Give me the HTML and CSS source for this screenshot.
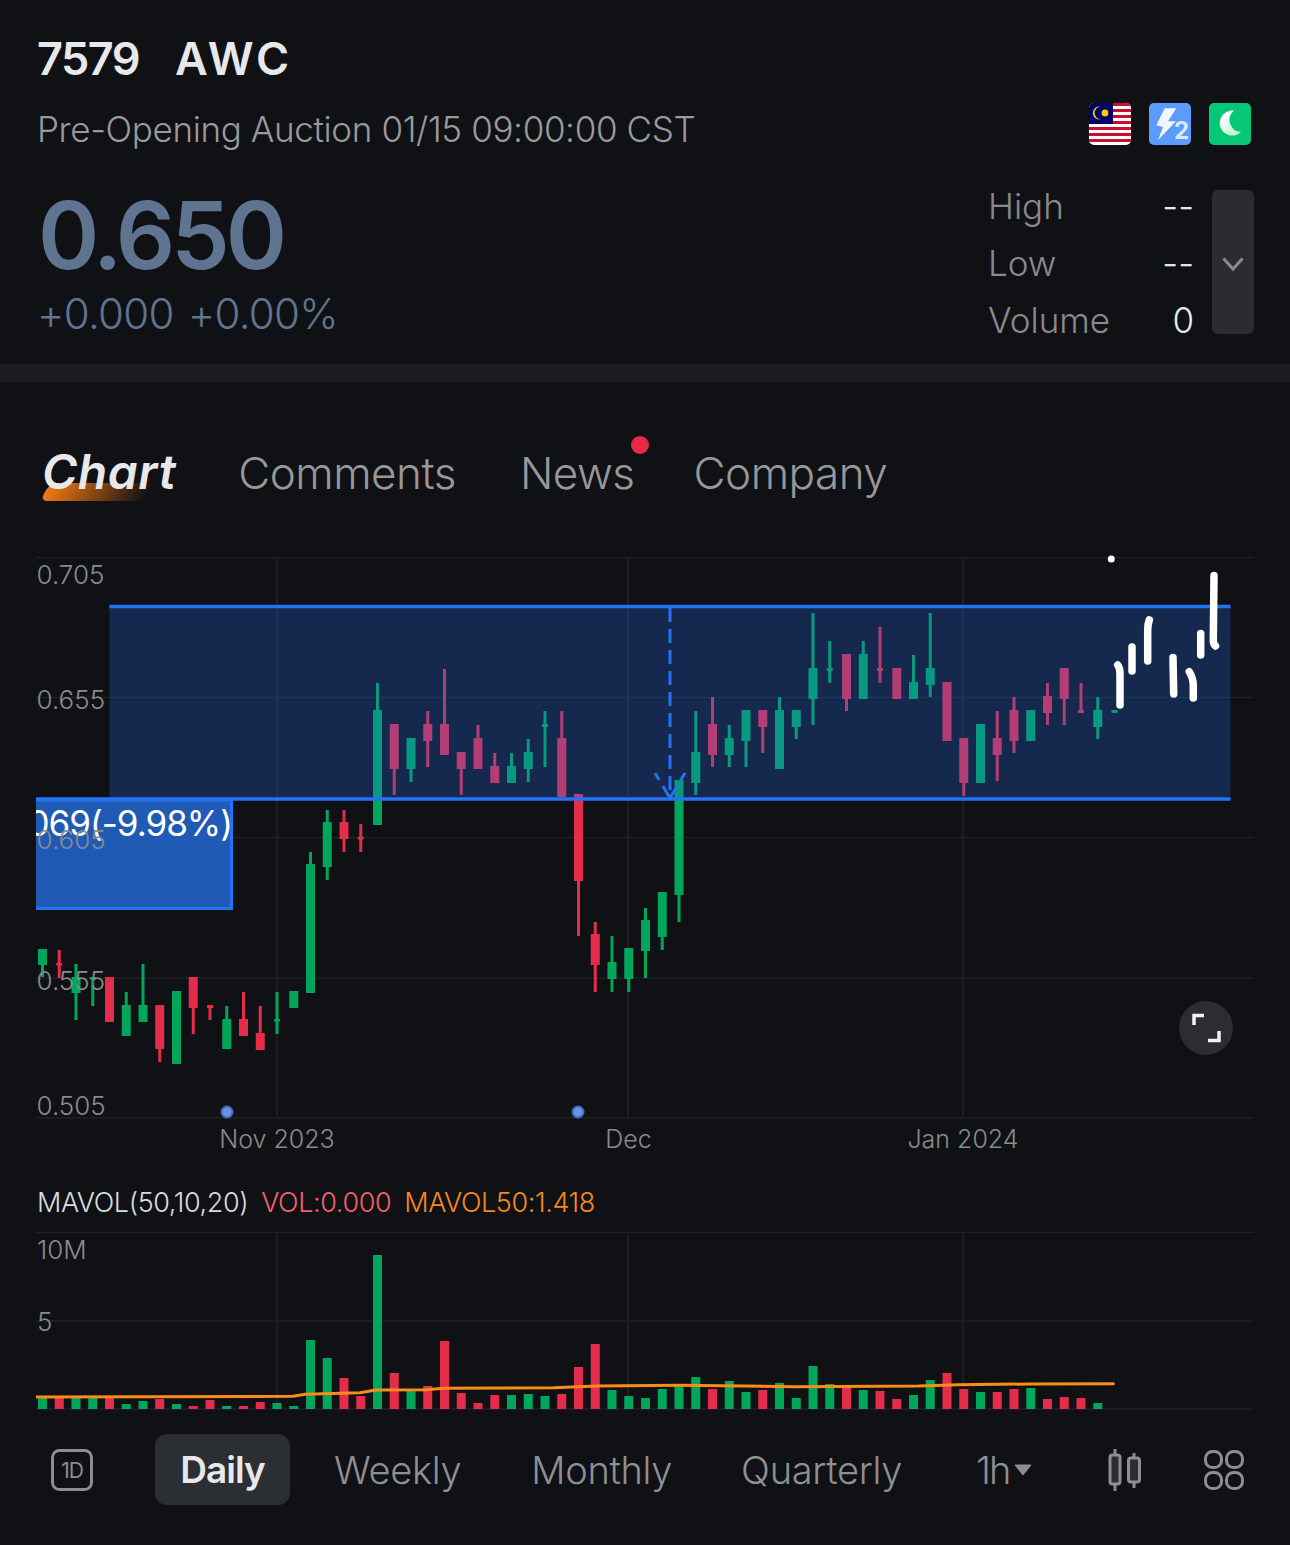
FILE: index.html
```html
<!DOCTYPE html>
<html lang="en">
<head>
  <meta charset="UTF-8">
  <title>7579 AWC</title>
  <link rel="stylesheet" href="styles.css">
</head>
<body>

  <header class="quote">
    <div class="quote-title"><span>7579</span><span class="quote-name">AWC</span></div>
    <div class="quote-status">
      <span class="status-text">Pre-Opening Auction 01/15 09:00:00 CST</span>
      <div class="badges">
        <svg class="badge" viewBox="0 0 42 42">
          <rect width="42" height="42" fill="#fff"/>
          <path d="M0 1.5h42M0 7.5h42M0 13.5h42M0 19.5h42M0 25.5h42M0 31.5h42M0 37.5h42" stroke="#c8102e" stroke-width="3"/>
          <rect width="24" height="21" fill="#010066"/>
          <path d="M12 3.6A6.6 6.6 0 1 0 12 16.4A5.4 5.4 0 1 1 12 3.6Z" fill="#ffcc00"/>
          <circle cx="16" cy="10" r="3.4" fill="#ffcc00"/>
        </svg>
        <svg class="badge" viewBox="0 0 42 42">
          <rect width="42" height="42" fill="#5b9bfb"/>
          <path d="M15.7 5.3H27.3L19 18.3H27L9 37L14 24L7.3 22.3Z" fill="#f2f7ff"/>
          <text class="badge-num" x="25" y="36">2</text>
        </svg>
        <svg class="badge" viewBox="0 0 42 42">
          <defs>
            <linearGradient id="moonFill" x1="0" y1="0" x2="1" y2="1">
              <stop offset="0.2" stop-color="#ffffff"/>
              <stop offset="1" stop-color="#a8eecb"/>
            </linearGradient>
          </defs>
          <rect width="42" height="42" fill="#05c776"/>
          <path d="M25 7.7A12.5 12.5 0 1 0 32 29A12 12 0 0 1 25 7.7Z" fill="url(#moonFill)"/>
        </svg>
      </div>
    </div>
    <div class="quote-main">
      <div>
        <div class="price">0.650</div>
        <div class="change"><span>+0.000</span><span>+0.00%</span></div>
      </div>
      <div class="stats">
        <dl class="stats-list">
          <div class="stats-row"><dt>High</dt><dd>--</dd></div>
          <div class="stats-row"><dt>Low</dt><dd>--</dd></div>
          <div class="stats-row"><dt>Volume</dt><dd>0</dd></div>
        </dl>
        <div class="stats-toggle">
          <svg width="22" height="14" viewBox="0 0 22 14"><path d="M1.5 1.5L11 12L20.5 1.5" fill="none" stroke="#8a8a8e" stroke-width="3"/></svg>
        </div>
      </div>
    </div>
  </header>

  <nav class="tabs">
    <a class="tab tab-active">Chart</a>
    <a class="tab tab-comments">Comments</a>
    <a class="tab tab-news">News</a>
    <a class="tab tab-company">Company</a>
  </nav>

  <svg class="price-chart" viewBox="0 540 1290 630">
    <defs>
      <clipPath id="boxClip"><rect x="36" y="799" width="197" height="111"/></clipPath>
    </defs>
    <path class="grid" d="M36 557.5H1254M36 697.5H1254M36 837.5H1254M36 978H1254M36 1118H1254"/>
    <path class="grid grid-v" d="M277 557V1118M628 557V1118M963 557V1118"/>
    <g id="candles"></g>

    <rect class="band" x="109.5" y="606.5" width="1121" height="192.5"/>
    <path class="band-line" d="M109.5 606.5H1230.5M36 799H1230.5"/>
    <path class="arrow" d="M670 608V797M670 798L655 773M670 798L685 773"/>

    <rect class="box" x="36" y="800" width="195.5" height="108.500"/>
    <path class="box-line" d="M36 800H231.500V908.500H36"/>
    <text class="box-text" x="232" y="836" clip-path="url(#boxClip)">-0.069(-9.98%)</text>

    <g class="axis">
      <text x="36.500" y="584">0.705</text>
      <text x="36.500" y="709">0.655</text>
      <text x="36.500" y="849">0.605</text>
      <text x="36.500" y="990">0.555</text>
      <text x="36.500" y="1115">0.505</text>
    </g>
    <g class="axis axis-time">
      <text x="277" y="1148">Nov 2023</text>
      <text x="628.500" y="1148">Dec</text>
      <text x="963" y="1148">Jan 2024</text>
    </g>

    <circle class="marker" cx="227" cy="1112" r="5.500"/>
    <circle class="marker" cx="578" cy="1112" r="5.500"/>

    <g class="scribble">
      <circle cx="1111.300" cy="559" r="3.500" fill="#fff" stroke="none"/>
      <path d="M1117.700 665Q1120 668 1120 674V705"/>
      <path d="M1132 647V671"/>
      <path d="M1149.300 620Q1147.700 624 1147.700 630V661"/>
      <path d="M1173 657.500L1173.700 694"/>
      <path d="M1189.300 671.700Q1193.300 678 1193.300 686V698"/>
      <path d="M1200.700 633.500V655"/>
      <path d="M1214 575.500L1213.300 640Q1213.300 644 1215.500 646"/>
    </g>

    <circle class="expand" cx="1206" cy="1028" r="27"/>
    <path class="expand-icon" d="M1194 1025V1015.500H1204M1219 1031V1040.500H1208"/>
  </svg>

  <div class="legend">
    <span>MAVOL(50,10,20)</span>
    <span class="legend-vol">VOL:0.000</span>
    <span class="legend-ma">MAVOL50:1.418</span>
  </div>

  <svg class="volume-chart" viewBox="0 1225 1290 195">
    <path class="grid" d="M36 1232.500H1254M36 1321H1254M36 1409H1254"/>
    <path class="grid grid-v" d="M277 1232V1409M628 1232V1409M963 1232V1409"/>
    <g id="bars"></g>
    <path class="ma-line" d="M36 1397L293 1396.300L305 1394.300L360 1392.700L376 1390L427 1389.700L443 1388.300L554 1387.700L597 1386L680 1385.300L795 1386.700L919 1386L958 1384.700L1030 1384L1114.500 1383.700"/>
    <g class="axis">
      <text x="37" y="1259">10M</text>
      <text x="37" y="1331">5</text>
    </g>
  </svg>

  <div class="periods">
    <svg class="icon-1d" width="42" height="42" viewBox="0 0 42 42">
      <rect x="1.500" y="1.500" width="39" height="39" rx="7" fill="none" stroke="#8e8e92" stroke-width="3"/>
      <text x="21" y="29">1D</text>
    </svg>
    <a class="period period-active">Daily</a>
    <a class="period period-weekly">Weekly</a>
    <a class="period period-monthly">Monthly</a>
    <a class="period period-quarterly">Quarterly</a>
    <a class="period period-hour">1h<svg width="18" height="12" viewBox="0 0 18 12"><path d="M1 1H17L9 11Z" fill="#8e8e92" stroke="#8e8e92" stroke-linejoin="round"/></svg></a>
    <svg class="icon-candles" width="36" height="44" viewBox="0 0 36 44">
      <path d="M8 1V7M8 36V43M27 5V10M27 34V40" stroke="#8e8e92" stroke-width="3" fill="none"/>
      <rect x="3" y="7" width="10" height="29" rx="2.500" fill="#2b2d30" stroke="#8e8e92" stroke-width="3"/>
      <rect x="21.500" y="10" width="11" height="24" rx="2.500" fill="#2b2d30" stroke="#8e8e92" stroke-width="3"/>
    </svg>
    <svg class="icon-grid" width="40" height="40" viewBox="0 0 40 40">
      <g fill="none" stroke="#8e8e92" stroke-width="3">
        <rect x="1.500" y="1.500" width="16" height="16" rx="7"/>
        <rect x="22.500" y="1.500" width="16" height="16" rx="7"/>
        <rect x="1.500" y="22.500" width="16" height="16" rx="7"/>
        <rect x="22.500" y="22.500" width="16" height="16" rx="7"/>
      </g>
    </svg>
  </div>

  <script src="chart.js"></script>
</body>
</html>
```

FILE: styles.css
```css
body {
  margin: 0;
  width: 1290px;
  height: 1545px;
  overflow: hidden;
  background-color: #101114;
  color: #e8e8ea;
  font-family: Inter, Roboto, sans-serif;
}
svg {
  display: block;
}

/* header */
.quote {
  height: 364px;
  padding: 0 36px 0 37px;
  box-sizing: border-box;
}
.quote-title {
  display: flex;
  gap: 36px;
  padding-top: 31px;
  font-size: 45px;
  line-height: 55px;
  font-weight: 600;
  letter-spacing: -1.5px;
}
.quote-name {
  letter-spacing: 3px;
}
.quote-status {
  display: flex;
  justify-content: space-between;
  align-items: center;
  margin-top: 17px;
  height: 42px;
  font-size: 35px;
  font-weight: 300;
  letter-spacing: -0.37px;
  color: #9a9a9d;
}
.status-text {
  position: relative;
  top: 5px;
}
.badges {
  display: flex;
  gap: 18px;
  margin-right: 3px;
}
.badge {
  width: 42px;
  height: 42px;
  border-radius: 5px;
}
.badge-num {
  font-size: 24px;
  font-weight: 700;
  fill: #dbe8ff;
}
.quote-main {
  display: flex;
  justify-content: space-between;
  margin-top: 45px;
}
.price {
  margin-left: 1px;
  font-size: 93px;
  line-height: 90px;
  font-weight: 600;
  letter-spacing: -4px;
  color: #5f7491;
}
.change {
  display: flex;
  gap: 14px;
  margin: 9px 0 0 0;
  font-size: 42px;
  line-height: 50px;
  font-weight: 300;
  letter-spacing: -0.7px;
  color: #5f7491;
}
.stats {
  display: flex;
  gap: 18px;
}
.stats-list {
  margin: -2px 0 0;
  width: 206px;
}
.stats-row {
  display: flex;
  justify-content: space-between;
  height: 57px;
  font-size: 35px;
  line-height: 36px;
  font-weight: 300;
}
.stats-row dt {
  color: #8a8a8e;
}
.stats-row dd {
  margin: 0;
  color: #e8e8ea;
}
.stats-toggle {
  display: flex;
  align-items: center;
  justify-content: center;
  width: 42px;
  height: 144px;
  padding-top: 4px;
  box-sizing: border-box;
  border-radius: 6px;
  background-color: #2a2c30;
}

/* tabs */
.tabs {
  display: flex;
  align-items: baseline;
  height: 176px;
  box-sizing: border-box;
  padding: 63px 0 0 42px;
  border-top: 18px solid #1a1c1f;
}
.tab {
  position: relative;
  font-size: 44px;
  line-height: 54px;
  font-weight: 300;
  letter-spacing: -0.5px;
  color: #98989b;
}
.tab-active {
  font-size: 48px;
  font-weight: 600;
  font-style: italic;
  letter-spacing: 0.5px;
  color: #e8e8ea;
  z-index: 0;
}
.tab-active::before {
  content: "";
  position: absolute;
  z-index: -1;
  left: 3px;
  bottom: -2px;
  width: 104px;
  height: 18px;
  border-radius: 7px 0 0 7px;
  transform: skewX(-30deg);
  background: linear-gradient(90deg, #f47a12, #f47a1200);
}
.tab-comments {
  margin-left: 62px;
}
.tab-news {
  margin-left: 64px;
}
.tab-news::after {
  content: "";
  position: absolute;
  top: -10px;
  right: -14px;
  width: 18px;
  height: 18px;
  border-radius: 50%;
  background-color: #e82b45;
}
.tab-company {
  margin-left: 59px;
}

/* charts */
.price-chart {
  width: 1290px;
  height: 630px;
}
.volume-chart {
  width: 1290px;
  height: 195px;
}
.grid {
  fill: none;
  stroke: #1e2023;
  stroke-width: 1.5;
}
.grid-v {
  stroke-width: 2;
  stroke: #1b1d20;
}
.band {
  fill: rgba(32, 114, 248, 0.25);
}
.band-line {
  fill: none;
  stroke: #2472f5;
  stroke-width: 3.400;
}
.arrow {
  fill: none;
  stroke: #2472f5;
  stroke-width: 3;
  stroke-dasharray: 14 7;
}
.box {
  fill: #1f5ab5;
}
.box-line {
  fill: none;
  stroke: #2472f5;
  stroke-width: 3;
}
.box-text {
  font-size: 35px;
  font-weight: 400;
  letter-spacing: -1px;
  fill: #fff;
  text-anchor: end;
}
.axis text {
  font-size: 26px;
  font-weight: 300;
  fill: #8a8b8e;
}
.axis-time text {
  text-anchor: middle;
  font-size: 25px;
}
.marker {
  fill: #6e90e4;
  stroke: #4469c4;
  stroke-width: 2;
}
.scribble path {
  fill: none;
  stroke: #fff;
  stroke-width: 7.500;
  stroke-linecap: round;
  stroke-linejoin: round;
}
.expand {
  fill: #2b2d30;
}
.expand-icon {
  fill: none;
  stroke: #f2f2f2;
  stroke-width: 3.500;
}
.ma-line {
  fill: none;
  stroke: #fb8c1a;
  stroke-width: 3;
}

/* volume legend */
.legend {
  display: flex;
  gap: 13px;
  height: 55px;
  padding: 14px 0 0 37px;
  box-sizing: border-box;
  font-size: 27px;
  line-height: 37px;
  font-weight: 300;
  letter-spacing: -0.4px;
  color: #dcdcde;
}
.legend-vol {
  color: #f0626a;
}
.legend-ma {
  color: #f5891f;
}

/* bottom bar */
.periods {
  display: flex;
  align-items: center;
  height: 99px;
  padding: 0 0 0 51px;
}
.period {
  font-size: 38px;
  font-weight: 300;
  letter-spacing: -0.3px;
  color: #8e9094;
}
.period-active {
  display: flex;
  align-items: center;
  justify-content: center;
  width: 135px;
  height: 71px;
  margin-left: 62px;
  border-radius: 12px;
  background-color: #2b2e33;
  font-size: 37px;
  font-weight: 600;
  letter-spacing: -1px;
  color: #e8e8ea;
}
.period-weekly {
  margin-left: 44px;
}
.period-monthly {
  margin-left: 70px;
}
.period-quarterly {
  margin-left: 69px;
}
.period-hour {
  display: flex;
  align-items: center;
  gap: 5px;
  margin-left: 74px;
  letter-spacing: -2px;
}
.icon-1d text {
  font-size: 21px;
  font-weight: 400;
  letter-spacing: -1px;
  fill: #8e8e92;
  text-anchor: middle;
}
.icon-candles {
  margin-left: 75px;
}
.icon-grid {
  margin-left: 61px;
}
```

FILE: chart.js
```js
const GREEN = '#00a65a';
const RED = '#e42d4b';
const NS = 'http://www.w3.org/2000/svg';
const X0 = 42.5;
const STEP = 16.75;

// high, body top, body bottom, low (page pixels), colour
const candles = [
  [949, 949, 965, 977, 'g'], [950, 963, 965.5, 978, 'r'], [964, 977, 993, 1020, 'g'], [977, 977, 979.5, 1006, 'g'],
  [977, 977, 1022, 1022, 'r'], [992, 1005, 1036, 1036, 'g'], [964, 1005, 1022, 1022, 'g'], [1005, 1005, 1049, 1062, 'r'],
  [991, 991, 1064, 1064, 'g'], [977, 977, 1008, 1034, 'r'], [1005, 1005, 1008, 1020, 'r'], [1006, 1019, 1049, 1049, 'g'],
  [992, 1019, 1036, 1036, 'r'], [1006, 1033, 1050, 1050, 'r'], [992, 1019, 1021.5, 1034, 'g'], [991, 991, 1008, 1008, 'g'],
  [852, 864, 993, 993, 'g'], [810, 822, 867, 880, 'g'], [810, 822, 839, 852, 'r'], [824, 837, 839.5, 852, 'r'],
  [683, 710, 825, 825, 'g'], [724, 724, 769, 795, 'r'], [738, 738, 769, 782, 'g'], [711, 724, 741, 767, 'r'],
  [669, 724, 755, 755, 'r'], [752, 752, 769, 795, 'r'], [725, 738, 769, 769, 'r'], [753, 766, 783, 783, 'r'],
  [753, 766, 783, 783, 'g'], [739, 752, 769, 782, 'g'], [711, 724, 727, 767, 'g'], [711, 738, 797, 797, 'r'],
  [794, 794, 881, 936, 'r'], [922, 934, 965, 992, 'r'], [936, 962, 979, 992, 'g'], [948, 948, 979, 992, 'g'],
  [908, 920, 951, 978, 'g'], [892, 892, 937, 950, 'g'], [780, 780, 895, 922, 'g'], [711, 752, 783, 795, 'g'],
  [697, 724, 755, 767, 'r'], [725, 738, 755, 767, 'g'], [710, 710, 741, 767, 'g'], [710, 710, 727, 753, 'r'],
  [697, 710, 769, 769, 'g'], [710, 710, 727, 739, 'g'], [613, 668, 699, 725, 'g'], [641, 668, 671, 683, 'g'],
  [654, 654, 699, 711, 'r'], [641, 654, 699, 699, 'g'], [627, 668, 671, 683, 'r'], [668, 668, 699, 699, 'r'],
  [655, 682, 699, 699, 'g'], [613, 668, 685, 697, 'g'], [682, 682, 741, 741, 'r'], [738, 738, 783, 796, 'r'],
  [724, 724, 783, 783, 'g'], [711, 738, 755, 781, 'r'], [697, 710, 741, 753, 'r'], [710, 710, 741, 741, 'g'],
  [683, 696, 713, 725, 'r'], [668, 668, 699, 725, 'r'], [683, 710, 713, 713, 'r'], [697, 710, 727, 739, 'g'],
  [710, 710, 713, 713, 'g']
];

// bar tops, the baseline is at 1409
const volumes = [
  [1397, 'g'], [1397, 'r'], [1397, 'g'], [1397, 'g'], [1397, 'r'], [1404, 'g'], [1401, 'g'], [1399, 'r'],
  [1404, 'g'], [1406, 'r'], [1400, 'r'], [1406, 'g'], [1406, 'r'], [1402, 'r'], [1403, 'g'], [1406, 'g'],
  [1340, 'g'], [1358, 'g'], [1378, 'r'], [1396, 'r'], [1255, 'g'], [1373, 'r'], [1390, 'g'], [1386, 'r'],
  [1341, 'r'], [1393, 'r'], [1403, 'r'], [1395, 'r'], [1395, 'g'], [1394, 'g'], [1396, 'g'], [1394, 'r'],
  [1367, 'r'], [1344, 'r'], [1390, 'g'], [1396, 'g'], [1398, 'g'], [1389, 'g'], [1385, 'g'], [1377, 'g'],
  [1389, 'r'], [1381, 'g'], [1392, 'g'], [1390, 'r'], [1383, 'g'], [1398, 'g'], [1366, 'g'], [1384, 'g'],
  [1387, 'r'], [1390, 'g'], [1391, 'r'], [1399, 'r'], [1395, 'g'], [1380, 'g'], [1373, 'r'], [1389, 'r'],
  [1392, 'g'], [1392, 'r'], [1389, 'r'], [1388, 'g'], [1399, 'r'], [1397, 'r'], [1398, 'r'], [1403, 'g']
];

function addRect(parent, x, y, w, h, fill) {
  const r = document.createElementNS(NS, 'rect');
  r.setAttribute('x', x);
  r.setAttribute('y', y);
  r.setAttribute('width', w);
  r.setAttribute('height', h);
  r.setAttribute('fill', fill);
  parent.appendChild(r);
}

const candleGroup = document.getElementById('candles');
candles.forEach((c, i) => {
  const x = X0 + STEP * i;
  const fill = c[4] === 'g' ? GREEN : RED;
  const bodyH = c[2] - c[1];
  const bodyW = bodyH < 4 ? 6 : 9;
  addRect(candleGroup, x - 1.5, c[0], 3, c[3] - c[0], fill);
  addRect(candleGroup, x - bodyW / 2, c[1], bodyW, bodyH, fill);
});

const barGroup = document.getElementById('bars');
volumes.forEach((v, i) => {
  const x = X0 + STEP * i;
  addRect(barGroup, x - 4.5, v[0], 9, 1409 - v[0], v[1] === 'g' ? GREEN : RED);
});
```
